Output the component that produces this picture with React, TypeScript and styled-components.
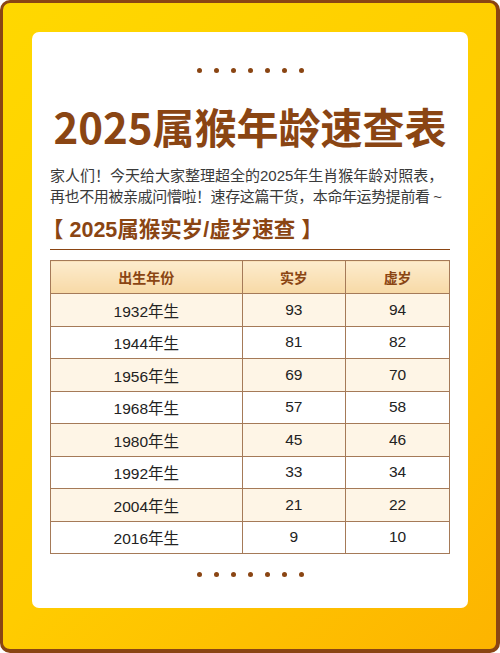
import React from "react";
import styled, { createGlobalStyle } from "styled-components";

const GlobalStyle = createGlobalStyle`
    html, body {
        margin: 0;
        padding: 0;
        background: #fff;
    }
    body {
        font-family: "Liberation Sans", "Noto Sans CJK SC", sans-serif;
    }
`;

const Frame = styled.div`
    box-sizing: border-box;
    width: 500px;
    height: 653px;
    padding: 29px 28px 41px 29px;
    border: 3px solid #8a4513;
    border-right-width: 4px;
    border-bottom-width: 4px;
    border-radius: 10px;
    background: linear-gradient(135deg, #ffd800 0%, #ffcc00 55%, #fdb400 100%);
`;

const Card = styled.div`
    box-sizing: border-box;
    height: 576px;
    padding: 0 18px;
    background: #fff;
    border-radius: 7px;
    display: flex;
    flex-direction: column;
`;

const Dots = styled.div<{ $top: number }>`
    display: flex;
    justify-content: center;
    gap: 12px;
    margin-top: ${(p) => p.$top}px;
`;

const Dot = styled.span`
    width: 5px;
    height: 5px;
    border-radius: 50%;
    background: #8a4513;
`;

const Title = styled.h1`
    margin: 28px 0 0;
    font-family: "Noto Sans CJK SC", sans-serif;
    font-size: 42px;
    line-height: 50px;
    font-weight: 700;
    color: #8a4513;
    text-align: center;
`;

const Intro = styled.p`
    margin: 14px 0 0;
    font-family: "Liberation Sans", "Noto Sans CJK SC", sans-serif;
    font-size: 15px;
    line-height: 21px;
    color: #3a3a3a;
    white-space: nowrap;
`;

const TightLine = styled.span`
    letter-spacing: -0.4px;
`;

const Section = styled.h2`
    margin: 9px 0 0;
    padding-bottom: 5px;
    border-bottom: 1.5px solid #8a4513;
    font-family: "Liberation Sans", "Noto Sans CJK SC", sans-serif;
    font-size: 21.5px;
    line-height: 28px;
    font-weight: 700;
    color: #8a4513;
`;

const SectionText = styled.span`
    margin-left: -8px;
`;

const Table = styled.table`
    margin-top: 10px;
    width: 100%;
    border-collapse: collapse;
    table-layout: fixed;
    border: 1.5px solid #a57a58;
`;

const HeadCell = styled.th`
    height: 32px;
    padding: 0;
    border: 1.5px solid #a57a58;
    background: linear-gradient(180deg, #fdeccd 0%, #f7d9a6 100%);
    color: #8a4513;
    font-family: "Noto Sans CJK SC", sans-serif;
    font-size: 14px;
    font-weight: 700;
`;

const Row = styled.tr<{ $tint: boolean }>`
    background: ${(p) => (p.$tint ? "#fef5e6" : "#fff")};
`;

const Cell = styled.td`
    height: 31.5px;
    padding: 0;
    border: 1.5px solid #a57a58;
    text-align: center;
    color: #222;
    font-size: 15.5px;
`;

const rows = [
    ["1932年生", 93, 94],
    ["1944年生", 81, 82],
    ["1956年生", 69, 70],
    ["1968年生", 57, 58],
    ["1980年生", 45, 46],
    ["1992年生", 33, 34],
    ["2004年生", 21, 22],
    ["2016年生", 9, 10],
] as const;

const DotRow: React.FC<{ top: number }> = ({ top }) => (
    <Dots $top={top}>
        {Array.from({ length: 7 }).map((_, i) => (
            <Dot key={i} />
        ))}
    </Dots>
);

const App: React.FC = () => {
    return (
        <>
            <GlobalStyle />
            <Frame>
                <Card>
                    <DotRow top={36} />
                    <Title>2025属猴年龄速查表</Title>
                    <Intro>
                        家人们！今天给大家整理超全的2025年生肖猴年龄对照表，
                        <br />
                        <TightLine>再也不用被亲戚问懵啦！速存这篇干货，本命年运势提前看 ~</TightLine>
                    </Intro>
                    <Section>
                        <SectionText>【 2025属猴实岁/虚岁速查 】</SectionText>
                    </Section>
                    <Table>
                        <colgroup>
                            <col style={{ width: "48%" }} />
                            <col style={{ width: "26%" }} />
                            <col style={{ width: "26%" }} />
                        </colgroup>
                        <thead>
                            <tr>
                                <HeadCell>出生年份</HeadCell>
                                <HeadCell>实岁</HeadCell>
                                <HeadCell>虚岁</HeadCell>
                            </tr>
                        </thead>
                        <tbody>
                            {rows.map((r, i) => (
                                <Row key={r[0]} $tint={i % 2 === 0}>
                                    <Cell>{r[0]}</Cell>
                                    <Cell>{r[1]}</Cell>
                                    <Cell>{r[2]}</Cell>
                                </Row>
                            ))}
                        </tbody>
                    </Table>
                    <DotRow top={18} />
                </Card>
            </Frame>
        </>
    );
};

export default App;
